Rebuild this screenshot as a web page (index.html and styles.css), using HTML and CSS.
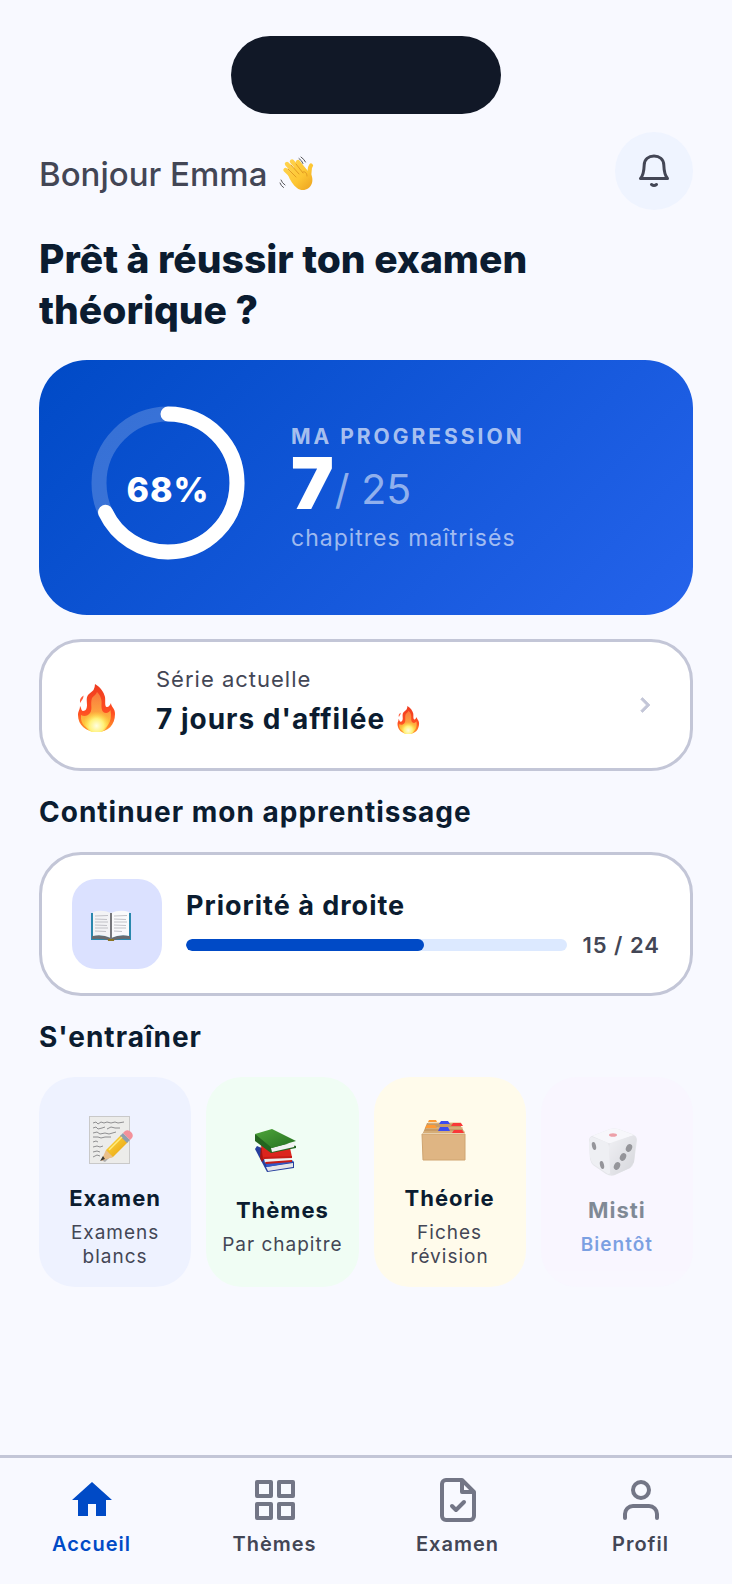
FILE: index.html
```html
<!DOCTYPE html>
<html lang="fr">
<head>
<meta charset="utf-8">
<meta name="viewport" content="width=device-width, initial-scale=1">
<title>Accueil</title>
<link rel="stylesheet" href="styles.css">
</head>
<body>
<svg class="defs" aria-hidden="true">
  <defs>
    <linearGradient id="flame-outer" x1="0" y1="0" x2="0" y2="1"><stop offset="0" stop-color="#ee3b20"/><stop offset=".6" stop-color="#ff4f22"/><stop offset="1" stop-color="#ff9d2b"/></linearGradient>
    <linearGradient id="flame-mid" x1="0" y1="0" x2="0" y2="1"><stop offset="0" stop-color="#f9763c"/><stop offset=".5" stop-color="#fda040"/><stop offset="1" stop-color="#ffd83c"/></linearGradient>
    <radialGradient id="flame-core" cx=".5" cy=".7" r=".6"><stop offset="0" stop-color="#fffde0"/><stop offset=".5" stop-color="#fff27a"/><stop offset="1" stop-color="#ffd83c" stop-opacity="0"/></radialGradient>
    <linearGradient id="skin" x1="0" y1="0" x2="36" y2="36" gradientUnits="userSpaceOnUse"><stop offset="0" stop-color="#ffd85a"/><stop offset=".6" stop-color="#fdc633"/><stop offset="1" stop-color="#e89a1c"/></linearGradient>
    <linearGradient id="pencil" x1="0" y1="0" x2="1" y2="1"><stop offset="0" stop-color="#ffdf45"/><stop offset="1" stop-color="#e69a08"/></linearGradient>
    <linearGradient id="green-cover" x1="0" y1="0" x2="1" y2="1"><stop offset="0" stop-color="#4ea53b"/><stop offset="1" stop-color="#25701f"/></linearGradient>
    <linearGradient id="die-right" x1="0" y1="0" x2="1" y2="1"><stop offset="0" stop-color="#e9e9eb"/><stop offset="1" stop-color="#b4b4b8"/></linearGradient>
    <symbol id="flame" viewBox="0 0 48 48">
      <path fill="url(#flame-outer)" d="M23 0c5 3 9 8 10 13 .6 4-.5 9 1.500 10 2 .5 3.500-2 4.500-4 0 4 4 5 4 11 0 11-7 18-18 18S6 41 6 31c0-4 2-5 2-9 1.500 2 1 4.500 3 5 3 0 4-3 4-6 0-4-1-7 1-10 1.500-2 4-3 5.500-5 1-2 1.500-4 1.500-6Z"/>
      <path fill="#ff5b3c" d="M11.500 11.500c0 4-2 4-3 7.500-1.500-3 .5-6 3-7.500Z"/>
      <path fill="url(#flame-mid)" d="M25 8c4 4 5 8 4.500 13-.3 5 1.500 8 4.500 8 2 0 4-2 4.500-3 2 12-3 20-13.500 20C14 46 8 40 9 31c3 2 7 1 9-2 3-4 0-9 2-15 1-2 4-3 5-6Z"/>
      <ellipse fill="url(#flame-core)" cx="24.500" cy="37" rx="12" ry="12"/>
    </symbol>
  </defs>
</svg>

<div class="app">
  <div class="island"></div>

  <main class="content">
    <header class="header">
      <p class="greeting">Bonjour Emma
        <svg class="wave" viewBox="0 0 36 36" role="img" aria-label="main qui salue">
          <g stroke="url(#skin)" stroke-linecap="round" fill="none">
            <path stroke-width="4.400" d="M6.500 14 16 23M8 8 18 19M13 5.500 22 16M19 6 26 15"/>
            <path stroke-width="4.200" d="M32 9.500c-2.500 3-.5 7-2.500 12"/>
          </g>
          <path fill="url(#skin)" d="M9 19 17 9l8 2 5 5c3 2 4 7 3 11-2 7-10 9-15 5-4-3-7-8-9-13Z"/>
          <path fill="none" stroke="#df961f" stroke-width=".9" stroke-linecap="round" d="m9 13 8 8M12 9l8 9M17 8l7 9M24 16c2-1 4 1 4 4"/>
          <path fill="none" stroke="#56565a" stroke-width="1" stroke-linecap="round" d="M20 2.500q3 2 4 5M22 1q3.500 2.500 4.500 5M2 24q1 3 4 5M1 27q1 3 3.500 4.500"/>
        </svg>
      </p>
      <button class="bell" type="button" aria-label="Notifications">
        <svg viewBox="0 0 36 36" fill="none" stroke="currentColor" stroke-width="3" stroke-linecap="round" stroke-linejoin="round">
          <path d="M4.500 25.500h27c-3-3.500-3.500-8-3.700-13.500C27.500 6.500 23.500 3 18 3S8.500 6.500 8.200 12C8 17.500 7.500 22 4.500 25.500Z"/>
          <path d="M15.500 31.500q2.500 2 5 0"/>
        </svg>
      </button>
    </header>

    <h1 class="title">Prêt à réussir ton examen théorique&nbsp;?</h1>

    <section class="progress-card">
      <div class="ring">
        <svg viewBox="0 0 162 162" fill="none" stroke="#fff" stroke-width="15" aria-hidden="true">
          <circle cx="81" cy="81" r="69" stroke-opacity=".2"/>
          <circle cx="81" cy="81" r="69" stroke-linecap="round" pathLength="100" stroke-dasharray="68 100" transform="rotate(-90 81 81)"/>
        </svg>
        <span class="ring-value">68%</span>
      </div>
      <div class="progress-text">
        <h2 class="eyebrow">MA PROGRESSION</h2>
        <p class="score"><strong class="score-value">7</strong><span class="score-total">/ 25</span></p>
        <p class="score-unit">chapitres maîtrisés</p>
      </div>
    </section>

    <a class="card streak" href="#serie">
      <svg class="streak-icon" aria-hidden="true"><use href="#flame"/></svg>
      <span class="streak-text">
        <span class="streak-label">Série actuelle</span>
        <span class="streak-value">7 jours d'affilée <svg class="flame-small" role="img" aria-label="feu"><use href="#flame"/></svg></span>
      </span>
      <svg class="chevron" viewBox="0 0 24 24" aria-hidden="true"><path fill="currentColor" stroke="currentColor" stroke-width=".6" d="M10 6 8.590 7.410 13.170 12l-4.580 4.590L10 18l6-6z"/></svg>
    </a>

    <h2 class="section-title">Continuer mon apprentissage</h2>
    <a class="card lesson" href="#priorite">
      <span class="lesson-icon">
        <svg viewBox="0 0 42 36" aria-hidden="true">
          <path fill="#2a88ad" d="M1 5h40v27H1z"/>
          <path fill="#6a6a6d" d="M2 28q10-2 19 2 9-4 19-2v3q-10-1-19 2-9-3-19-2Z"/>
          <path fill="#f3f3f5" d="M3 4q9-3 18 1v25q-9-4-18-2Z"/>
          <path fill="#fafafb" d="M39 4q-9-3-18 1v25q9-4 18-2Z"/>
          <path fill="#77777b" d="M20 5h2v26h-2z"/>
          <path fill="none" stroke="#b4b4ba" stroke-width=".8" d="m5 8 13-.5M5 11l12 .5M5 14h13M5 17l12 .5M5 20h13M5 23l11 .5M24 8l13-.5M24 11l12 .5M24 14h13M24 17l12 .5M24 20h12M24 23l8 .5"/>
          <path fill="#8a7322" d="M18 31h6v2h-6z"/>
        </svg>
      </span>
      <span class="lesson-body">
        <span class="lesson-title">Priorité à droite</span>
        <span class="lesson-progress">
          <span class="bar"><span class="bar-fill" style="width: 62.5%"></span></span>
          <span class="lesson-count">15 / 24</span>
        </span>
      </span>
    </a>

    <h2 class="section-title">S'entraîner</h2>
    <div class="tiles">
      <a class="tile tile-blue" href="#examen">
        <svg class="tile-icon" viewBox="0 0 58 48" aria-hidden="true">
          <path fill="#c9c9c9" d="M3 0h41v48H3z"/><path fill="#ececea" d="M4 1h39v46H4z"/>
          <path fill="none" stroke="#77777a" stroke-width=".8" d="m7 7 3-1 2 2 3-2 3 1 3-1 4 1 4-1 3 1 6-1M7 12l3-1 2 2 4-1 3-1M21 13l4-2 4 1 5 0M7 17l4-1 3 2 5-1 4 1 7-2M7 21l5 0 3 1 4-1 6 0M7 26l3-1 2 1M7 31l4-1 3 1 3-1M7 36l4-1 3 1M7 41l4-2 3 1"/>
          <path fill="#777" opacity=".55" d="m15 44 4 2 23-23-2-3Z"/>
          <path fill="url(#pencil)" d="m20 34 15-15 7 7-15 15-8 2Z"/>
          <path fill="#eac08c" d="m20 34 7 7-12 4Z"/><path fill="#3d3a35" d="m17 40 2 3-5 2Z"/>
          <path fill="#8f9fad" d="m34 20 3-3 7 7-3 3Z"/><path fill="#f3919a" d="m37 17 2-2q3-2 6 1t1 6l-2 2Z"/>
          <path stroke="#ffec7d" stroke-width="1.500" d="M23 34 36 21"/>
        </svg>
        <span class="tile-title">Examen</span>
        <span class="tile-sub">Examens blancs</span>
      </a>
      <a class="tile tile-green" href="#themes">
        <svg class="tile-icon" viewBox="0 0 58 48" aria-hidden="true">
          <path fill="#263f9d" d="M4 18 2 21l12 23 27-4v-6Z"/><path fill="#e5e5e8" d="m13 39 27-4v4l-25 4Z"/><path fill="#3259c8" d="m4 17 10 22 27-5-5-5-25 3Z"/>
          <path fill="#a81410" d="m8 17 3 14-2 3-2-4Z"/><path fill="#dc241d" d="m8 16 29 4 2 9-29 2Z"/><path fill="#eee" d="m11 30 28-1v4l-27 2Z"/><path fill="#c61c16" d="m10 29 29-1v2l-28 1Zm2 5 27-2v2l-26 2Z"/>
          <path fill="#24651f" d="M2 6v7l16 12 25-5v-2Z"/><path fill="#f1f1f1" d="m18 20 24-6-1 5-22 5Z"/><path fill="url(#green-cover)" d="M2 6 19 1l24 12-24 7Z"/>
        </svg>
        <span class="tile-title">Thèmes</span>
        <span class="tile-sub">Par chapitre</span>
      </a>
      <a class="tile tile-yellow" href="#theorie">
        <svg class="tile-icon" viewBox="0 0 58 48" aria-hidden="true">
          <path fill="#c89b65" d="m2 17 4-10h32l6 10Z"/>
          <path fill="none" stroke="#e3bf8b" d="m7 7 33 0M5 12h37M3 16h41"/>
          <path fill="#ff9a35" d="m7 6 1-2h7l1 2Zm-3 6 2-3h8l2 3Z"/><path fill="#3c4cf0" d="m18 8 2-3h7l2 3Zm-1 7 2-4h8l2 4Z"/><path fill="#f93838" d="m30 10 2-3h8l2 3Zm1 7 2-3h8l2 3Z"/>
          <path fill="#dfb583" d="M1 18h43v26H2z"/><path fill="none" stroke="#cfa470" d="M1 18h43v26H2Z"/>
        </svg>
        <span class="tile-title">Théorie</span>
        <span class="tile-sub">Fiches révision</span>
      </a>
      <a class="tile tile-purple tile-soon" href="#misti" aria-disabled="true">
        <svg class="tile-icon" viewBox="0 0 58 48" aria-hidden="true">
          <path fill="#d2d2d5" d="M4 8 22 1q4-1 8 0l14 5q5 2 5 6l-3 22q-1 4-4 6L27 47q-4 2-9-1L5 37q-2-2-3-6L1 13q0-4 3-5Z"/>
          <path fill="#f7f7f8" d="m4 8 18-7q4-1 8 0l16 6-18 7q-5 2-8 1Z"/><path fill="#e6e6e9" d="M2 10q1-2 5 0l11 4q3 1 3 6l2 22q0 4-3 4L5 36q-2-2-3-7L1 15Z"/><path fill="url(#die-right)" d="M21 20q0-5 4-6l18-6q5-1 5 3l-2 23-4 6-16 7q-4 0-4-4Z"/>
          <ellipse cx="25" cy="7" rx="4" ry="1.800" fill="#e34a54"/>
          <g fill="#343438"><ellipse cx="6" cy="18" rx="2" ry="4" transform="rotate(-14 6 18)"/><ellipse cx="14" cy="37" rx="2" ry="4" transform="rotate(-14 14 37)"/><ellipse cx="41" cy="20" rx="3" ry="4" transform="rotate(25 41 20)"/><ellipse cx="35" cy="29" rx="3" ry="4" transform="rotate(25 35 29)"/><ellipse cx="29" cy="38" rx="3" ry="4" transform="rotate(25 29 38)"/></g>
        </svg>
        <span class="tile-title">Misti</span>
        <span class="tile-sub">Bientôt</span>
      </a>
    </div>
  </main>

  <nav class="tabs" aria-label="Navigation principale">
    <a class="tab tab-active" href="#accueil" aria-current="page">
      <svg class="tab-icon" viewBox="0 0 24 24" fill="currentColor" aria-hidden="true"><path d="M10 20v-6h4v6h5v-8h3L12 3 2 12h3v8z"/></svg>
      Accueil
    </a>
    <a class="tab" href="#themes">
      <svg class="tab-icon tab-icon-line" viewBox="0 0 24 24" aria-hidden="true"><path d="M3 3h7v7H3zM14 3h7v7h-7zM14 14h7v7h-7zM3 14h7v7H3z"/></svg>
      Thèmes
    </a>
    <a class="tab" href="#examen">
      <svg class="tab-icon tab-icon-line" viewBox="0 0 24 24" aria-hidden="true"><path d="M14 2H6a2 2 0 0 0-2 2v16a2 2 0 0 0 2 2h12a2 2 0 0 0 2-2V8zM14 2v6h6M9 15l2 2 4-4"/></svg>
      Examen
    </a>
    <a class="tab" href="#profil">
      <svg class="tab-icon tab-icon-line" viewBox="0 0 24 24" aria-hidden="true"><path d="M20 21v-2a4 4 0 0 0-4-4H8a4 4 0 0 0-4 4v2"/><circle cx="12" cy="7" r="4"/></svg>
      Profil
    </a>
  </nav>
</div>
</body>
</html>
```
FILE: styles.css
```css
:root {
  --bg: #f8f9ff;
  --ink: #0b1c30;
  --muted: #434655;
  --line: #c3c6d7;
  --primary: #004ac6;
  --tracking: 1px;
}

*,
*::before,
*::after {
  box-sizing: border-box;
}

body,
h1,
h2,
p {
  margin: 0;
}

body {
  background: var(--bg);
  color: var(--ink);
  font-family: Inter, "Liberation Sans", sans-serif;
}

a {
  color: inherit;
  text-decoration: none;
}

svg {
  display: block;
  flex: none;
}

.defs {
  position: absolute;
  width: 0;
  height: 0;
}

.app {
  display: flex;
  flex-direction: column;
  min-height: 100vh;
  padding-top: 36px;
}

.island {
  align-self: center;
  width: 270px;
  height: 78px;
  border-radius: 39px;
  background: #111827;
}

.content {
  padding: 18px 39px 24px;
}

.header {
  display: flex;
  align-items: center;
  justify-content: space-between;
}

.greeting {
  display: flex;
  align-items: center;
  gap: 12px;
  padding-top: 6px;
  color: var(--muted);
  font-size: 33px;
  font-weight: 500;
  line-height: 48px;
}

.wave {
  width: 36px;
  height: 36px;
}

.bell {
  display: grid;
  place-items: center;
  width: 78px;
  height: 78px;
  padding: 0;
  border: 0;
  border-radius: 50%;
  background: #eff4ff;
  color: var(--muted);
}

.bell svg {
  width: 36px;
  height: 36px;
}

.title {
  margin: 23px 0 25px;
  font-size: 39px;
  font-weight: 800;
  line-height: 51px;
}

.progress-card {
  display: flex;
  align-items: flex-start;
  gap: 42px;
  padding: 42px 48px 51px;
  border-radius: 48px;
  background: linear-gradient(135deg, var(--primary), #2563eb);
  color: #fff;
}

.ring {
  display: grid;
  place-items: center;
}

.ring > * {
  grid-area: 1 / 1;
}

.ring svg {
  width: 162px;
  height: 162px;
}

.ring-value {
  padding-top: 12px;
  font-size: 34px;
  font-weight: 800;
  line-height: 39px;
  letter-spacing: var(--tracking);
}

.progress-text {
  padding-top: 21px;
}

.eyebrow {
  color: rgb(255 255 255 / 65%);
  font-size: 21px;
  font-weight: 700;
  line-height: 27px;
  letter-spacing: 3px;
}

.score {
  display: flex;
  align-items: flex-end;
  gap: 1px;
}

.score-value {
  font-size: 72px;
  font-weight: 900;
  line-height: 66px;
}

.score-total {
  color: rgb(255 255 255 / 55%);
  font-size: 41px;
  line-height: 54px;
}

.score-unit {
  color: rgb(255 255 255 / 60%);
  font-size: 23px;
  line-height: 44px;
  letter-spacing: var(--tracking);
}

.card {
  display: flex;
  align-items: center;
  border: 3px solid var(--line);
  border-radius: 42px;
  background: #fff;
}

.streak {
  gap: 36px;
  margin-top: 24px;
  padding: 21px 30px 25px;
}

.streak-icon {
  align-self: flex-end;
  width: 48px;
  height: 48px;
  margin-bottom: 11px;
}

.streak-text {
  flex: 1;
  letter-spacing: var(--tracking);
}

.streak-label {
  display: block;
  color: var(--muted);
  font-size: 22px;
  line-height: 33px;
}

.streak-value {
  display: flex;
  align-items: center;
  gap: 9px;
  font-size: 28px;
  font-weight: 700;
  line-height: 47px;
}

.flame-small {
  width: 28px;
  height: 28px;
}

.chevron {
  width: 30px;
  height: 30px;
  margin-top: 4px;
  color: var(--line);
}

.section-title {
  margin: 24px 0 22px;
  font-size: 28px;
  font-weight: 700;
  line-height: 35px;
  letter-spacing: var(--tracking);
}

.lesson {
  gap: 24px;
  padding: 24px 30px;
}

.lesson-icon {
  display: grid;
  place-items: center start;
  width: 90px;
  height: 90px;
  padding: 3px 0 0 18px;
  border-radius: 24px;
  background: #dbe1ff;
}

.lesson-icon svg {
  width: 42px;
  height: 36px;
}

.lesson-body {
  display: grid;
  flex: 1;
  gap: 4px;
  letter-spacing: var(--tracking);
}

.lesson-title {
  font-size: 27px;
  font-weight: 700;
  line-height: 38px;
}

.lesson-progress {
  display: flex;
  align-items: center;
  gap: 15px;
}

.bar {
  flex: 1;
  height: 12px;
  overflow: hidden;
  border-radius: 6px;
  background: #dce9ff;
}

.bar-fill {
  display: block;
  height: 100%;
  border-radius: 6px;
  background: var(--primary);
}

.lesson-count {
  color: var(--muted);
  font-size: 22px;
  font-weight: 600;
  line-height: 33px;
}

.tiles {
  display: grid;
  grid-template-columns: repeat(4, 1fr);
  gap: 15px;
}

.tile {
  display: flex;
  flex-direction: column;
  align-items: center;
  justify-content: center;
  padding: 18px 15px;
  border-radius: 36px;
  letter-spacing: var(--tracking);
  text-align: center;
}

.tile-blue { background: #eef2ff; }
.tile-green { background: #f0fdf4; }
.tile-yellow { background: #fffbeb; }
.tile-purple { background: #faf5ff; }

.tile-soon {
  opacity: .5;
}

.tile-icon {
  width: 58px;
  height: 48px;
  margin: 21px 0 19px;
}

.tile-title {
  font-size: 22px;
  font-weight: 700;
  line-height: 30px;
}

.tile-sub {
  margin-top: 8px;
  color: var(--muted);
  font-size: 19px;
  line-height: 24px;
}

.tile-soon .tile-sub {
  color: var(--primary);
  font-weight: 600;
}

.tabs {
  display: grid;
  grid-template-columns: repeat(4, 1fr);
  margin-top: auto;
  padding: 18px 0 26px;
  border-top: 3px solid var(--line);
}

.tab {
  display: flex;
  flex-direction: column;
  align-items: center;
  gap: 7px;
  color: var(--muted);
  font-size: 20px;
  font-weight: 600;
  line-height: 27px;
  letter-spacing: var(--tracking);
}

.tab-active {
  color: var(--primary);
}

.tab-icon {
  width: 48px;
  height: 48px;
}

.tab-icon-line {
  fill: none;
  stroke: #737686;
  stroke-width: 2;
  stroke-linecap: round;
  stroke-linejoin: round;
}
```
